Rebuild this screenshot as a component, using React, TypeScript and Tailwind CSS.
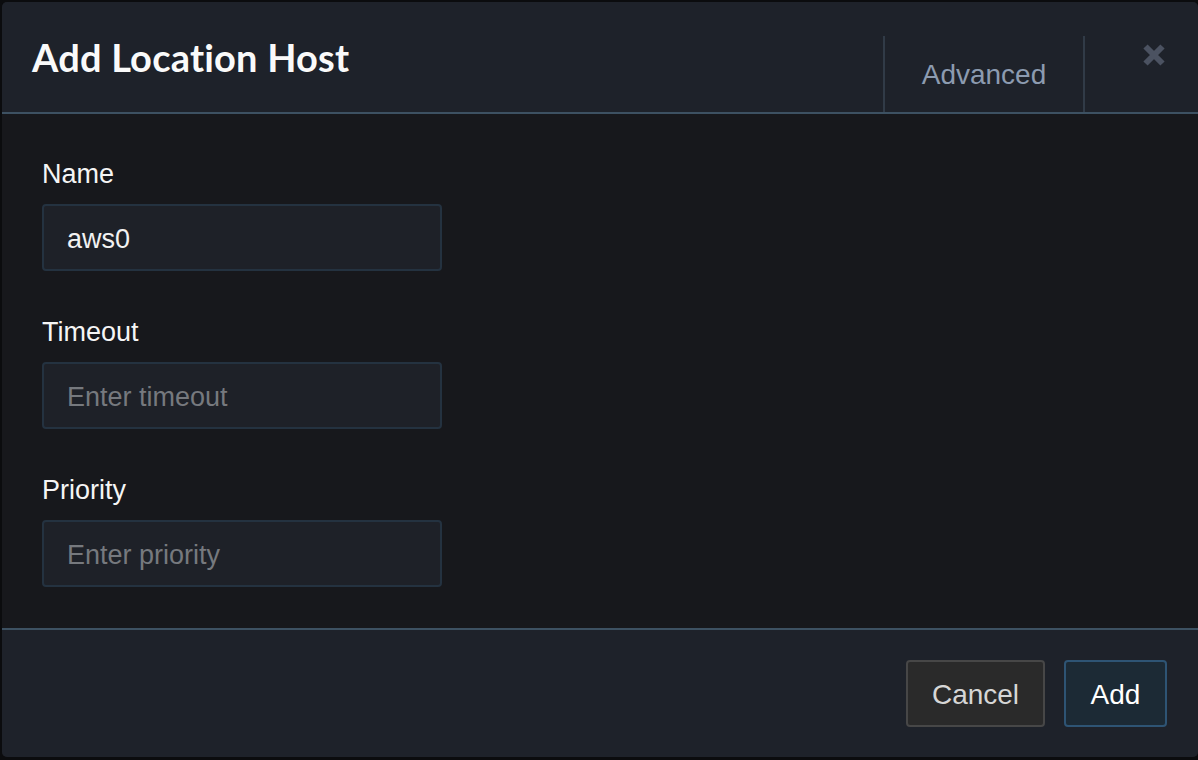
import React from "react";

function Field({ label, value, placeholder }: { label: string; value?: string; placeholder: string }) {
  return (
    <div className="flex flex-col">
      <label className="text-[27px] leading-[30px] text-[#f5f5f5]">{label}</label>
      <input
        readOnly
        defaultValue={value}
        placeholder={placeholder}
        className="mt-[15px] w-[400px] h-[67px] rounded-[4px] border-2 border-[#243240] bg-[#1e2128] px-[23px] pt-[3px] text-[27px] text-[#f2f2f2] placeholder:text-[#76797e] outline-none"
      />
    </div>
  );
}

export default function App() {
  return (
    <div
      className="w-[1198px] h-[760px] bg-[#0b0c0e] pt-[2px] pl-[2px] pb-[3px] overflow-hidden"
      style={{ fontFamily: '"Liberation Sans", Arial, sans-serif' }}
    >
      <div className="h-full flex flex-col rounded-[5px] overflow-hidden bg-[#17181c]">
        {/* Header */}
        <div className="h-[112px] shrink-0 flex bg-[#1e222a] border-b-2 border-[#3d5162]">
          <div className="flex-1 pl-[30px] pt-[32px]">
            <h1
              className="text-[38px] leading-[46px] font-bold text-[#fafafa] tracking-[0.2px]"
              style={{ fontFamily: 'Lato, "Open Sans", sans-serif' }}
            >
              Add Location Host
            </h1>
          </div>
          <div className="self-end h-[76px] w-[202px] border-x-2 border-[#313b47] flex items-center justify-center pt-[1px]">
            <span className="text-[28px] text-[#8c9bb0]">Advanced</span>
          </div>
          <div className="w-[113px] flex justify-center pl-[24px] pt-[41px]">
            <svg width="24" height="24" viewBox="0 0 24 24">
              <path d="M3.5 3.5 L20.5 20.5 M20.5 3.5 L3.5 20.5" stroke="#4b5261" strokeWidth="6" strokeLinecap="butt" />
            </svg>
          </div>
        </div>
        {/* Body */}
        <div className="flex-1 pl-[40px] pt-[45px] flex flex-col gap-[46px]">
          <Field label="Name" value="aws0" placeholder="" />
          <Field label="Timeout" placeholder="Enter timeout" />
          <Field label="Priority" placeholder="Enter priority" />
        </div>
        {/* Footer */}
        <div className="h-[129px] shrink-0 bg-[#1e222a] border-t-2 border-[#3d5162] flex items-start justify-end gap-[19px] pt-[30px] pr-[31px]">
          <button className="h-[67px] w-[139px] pt-[3px] rounded-[4px] border-2 border-[#474747] bg-[#2a2a2a] text-[28px] text-[#d6d6d6]">
            Cancel
          </button>
          <button className="h-[67px] w-[103px] pt-[3px] rounded-[4px] border-2 border-[#2e5474] bg-[#1c2a35] text-[28px] text-white">
            Add
          </button>
        </div>
      </div>
    </div>
  );
}
